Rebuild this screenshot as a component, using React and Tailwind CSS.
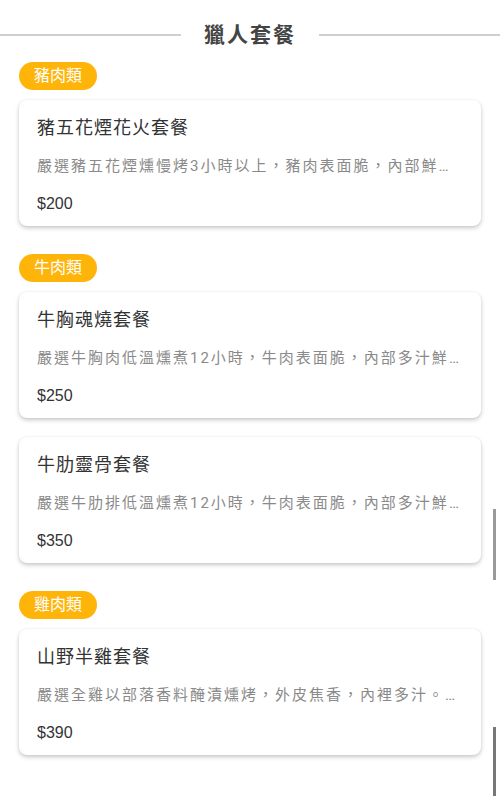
import React from 'react';

const MENU = [
  {
    category: '豬肉類',
    items: [
      { name: '豬五花煙花火套餐', desc: '嚴選豬五花煙燻慢烤3小時以上，豬肉表面脆，內部鮮嫩多汁，搭配特製醬料。', price: 200 },
    ],
  },
  {
    category: '牛肉類',
    items: [
      { name: '牛胸魂燒套餐', desc: '嚴選牛胸肉低溫燻煮12小時，牛肉表面脆，內部多汁鮮嫩，入口即化。', price: 250 },
      { name: '牛肋靈骨套餐', desc: '嚴選牛肋排低溫燻煮12小時，牛肉表面脆，內部多汁鮮嫩，入口即化。', price: 350 },
    ],
  },
  {
    category: '雞肉類',
    items: [
      { name: '山野半雞套餐', desc: '嚴選全雞以部落香料醃漬燻烤，外皮焦香，內裡多汁。搭配季節時蔬。', price: 390 },
    ],
  },
];

const MenuCard = ({ name, desc, price }) => (
  <div className="bg-white rounded-lg shadow-[0_2px_4px_rgba(0,0,0,0.22),0_0_2px_rgba(0,0,0,0.06)] px-[18px] pt-4 pb-[10px]">
    <h3 className="text-[18px] leading-6 tracking-[1px] text-[#333]">{name}</h3>
    <p className="mt-[14px] text-[15px] leading-6 tracking-[2px] text-[#8a8a8a] truncate">{desc}</p>
    <p className="mt-[14px] text-[16px] leading-6 text-[#333]" style={{ fontFamily: '"Liberation Sans", Arial, sans-serif' }}>${price}</p>
  </div>
);

export default function App() {
  return (
    <div
      className="relative min-h-[796px] bg-white"
      style={{ fontFamily: 'Roboto, "Noto Sans CJK TC", sans-serif' }}
    >
      {/* 標題 */}
      <div className="flex items-center pt-5">
        <div className="flex-1 h-[2px] bg-[#cfcfcf]" />
        <h1 className="px-[23px] text-[21px] leading-[30px] font-bold tracking-[2px] text-[#444]">獵人套餐</h1>
        <div className="flex-1 h-[2px] bg-[#cfcfcf]" />
      </div>

      <div className="px-[19px] pt-3 pb-10 flex flex-col gap-[28px]">
        {MENU.map((group) => (
          <section key={group.category} className="flex flex-col">
            <span className="self-start h-[28px] px-[15px] rounded-full bg-[#FFB40A] text-white text-[16px] leading-[28px]">
              {group.category}
            </span>
            <div className="mt-[10px] flex flex-col gap-[19px]">
              {group.items.map((item) => (
                <MenuCard key={item.name} {...item} />
              ))}
            </div>
          </section>
        ))}
      </div>

      {/* 捲動指示 */}
      <div className="absolute left-[493px] top-[509px] w-[3px] h-[71px] bg-[#9a9a9a]" />
      <div className="absolute left-[493px] top-[727px] w-[3px] h-[69px] bg-[#777]" />
    </div>
  );
}
